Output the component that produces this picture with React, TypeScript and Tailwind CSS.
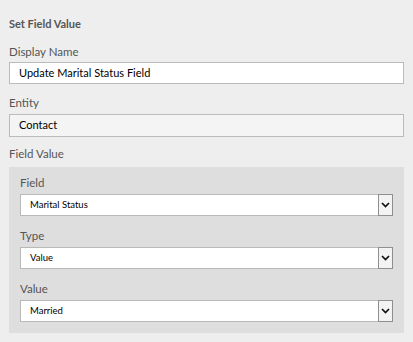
const font = { fontFamily: 'Lato, "Open Sans", sans-serif' };

const Chevron = () => (
	<svg viewBox="0 0 9 6" className="w-[9px] h-[6px]">
		<path d="M1 1L4.5 4.5L8 1" fill="none" stroke="#111" strokeWidth="1.7" />
	</svg>
);

const SelectBox = ({ value }: { value: string }) => (
	<div className="flex h-[22px] bg-white border border-[#b9b9b9]">
		<div className="flex-1 flex items-center pl-[9px] text-[9.5px] text-black">{value}</div>
		<div className="w-[15px] -my-px -mr-px flex items-center justify-center border border-[#8f8f8f] bg-[#f3f3f3]">
			<Chevron />
		</div>
	</div>
);

export default function App() {
	const inner = [
		{ label: 'Field', value: 'Marital Status' },
		{ label: 'Type', value: 'Value' },
		{ label: 'Value', value: 'Married' },
	];
	return (
		<div className="w-[413px] h-[342px] bg-[#eeeeee] text-[#444]" style={font}>
			<div className="pl-[9px] pr-[9px] pt-[17px]">
				<p className="text-[11px] font-bold text-[#555] leading-[14px]">Set Field Value</p>
				<p className="mt-[14px] text-[11.5px] text-[#555] leading-[14px]">Display Name</p>
				<div className="mt-[3px] h-[22px] flex items-center bg-white border border-[#bbbbbb] pl-[9px] text-[11px] text-black">
					Update Marital Status Field
				</div>
				<p className="mt-[12px] text-[11.5px] text-[#555] leading-[14px]">Entity</p>
				<div className="mt-[4px] h-[23px] flex items-center bg-[#f4f4f4] border border-[#bbbbbb] pl-[9px] text-[11px] text-black">
					Contact
				</div>
				<p className="mt-[10px] text-[11.5px] text-[#555] leading-[14px]">Field Value</p>
				<div className="mt-[6px] h-[166px] bg-[#dedede] pl-[11px] pr-[11px] pt-[9px] flex flex-col gap-[13px]">
					{inner.map((item, key) => (
						<div key={key}>
							<p className="text-[11.5px] text-[#555] leading-[14px]">{item.label}</p>
							<div className="mt-[4px]">
								<SelectBox value={item.value} />
							</div>
						</div>
					))}
				</div>
			</div>
		</div>
	);
}
